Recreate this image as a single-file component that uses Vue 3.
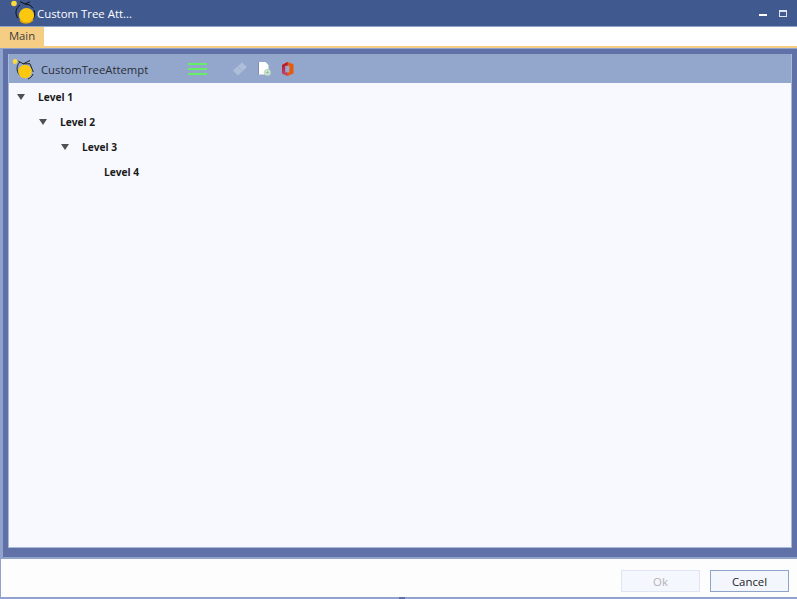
<script setup>
const levels = [
  { label: 'Level 1', arrow: true },
  { label: 'Level 2', arrow: true },
  { label: 'Level 3', arrow: true },
  { label: 'Level 4', arrow: false }
]
</script>

<template>
  <div class="window">
    <header class="titlebar">
      <svg class="logo" width="26" height="26" viewBox="0 0 26 26">
        <circle cx="3" cy="3.5" r="2.8" fill="#ffd83a" />
        <path d="M9 1.7 L14 4 L19 1.7 M14 4 L19 5 L22 8.3 M9 5 C5 8 3.5 13 6.7 18.3 M23 10 C24.5 13 23.5 17 22 19" fill="none" stroke="#111" stroke-width="1" />
        <circle cx="15.5" cy="15.5" r="7.6" fill="#fcc80f" />
        <path d="M9 20 C12 24 18 24 22 20" fill="none" stroke="#e8a800" stroke-width="1.6" />
      </svg>
      <span class="title">Custom Tree Att...</span>
      <div class="controls">
        <span class="minimize"></span>
        <span class="maximize"></span>
      </div>
    </header>

    <nav class="menubar">
      <span class="tab">Main</span>
    </nav>

    <main class="stage">
      <section class="panel">
        <div class="panel-head">
          <svg class="panel-logo" width="24" height="24" viewBox="0 0 24 24">
            <circle cx="2" cy="4.5" r="2.4" fill="#ffd83a" />
            <path d="M5.3 4.2 L10.3 6.8 L17 3.5 M10.3 6.8 L17 6.8 L20.3 15 M7 5 C3.6 8 2.6 14 7 18.5 M20 17 C19 20 17 21 15 22" fill="none" stroke="#222" stroke-width="1" />
            <circle cx="12" cy="14.5" r="6.8" fill="#fcc80f" />
          </svg>
          <span class="panel-title">CustomTreeAttempt</span>
          <div class="hamburger"><i></i><i></i><i></i></div>
          <svg class="tool eraser" width="16" height="16" viewBox="0 0 16 16">
            <path d="M1 9.5 L10 1.5 L15 6 L6 14.5 Z" fill="#aebeda" />
            <path d="M5.5 5.5 L10.5 10" stroke="#9fb0d0" stroke-width="1" />
          </svg>
          <svg class="tool page" width="14" height="16" viewBox="0 0 14 16">
            <path d="M0.5 1 H7.5 L10.5 4 V13.5 H0.5 Z" fill="#fff" />
            <path d="M0.5 1 V13.5" stroke="#7d8ca8" stroke-width="1" />
            <circle cx="9.5" cy="11.5" r="3.2" fill="#cfe6d2" stroke="#a7c8b0" stroke-width="0.6" />
            <path d="M9.5 9.8 V13.2 M7.8 11.5 H11.2" stroke="#8fbf9f" stroke-width="0.8" />
          </svg>
          <svg class="tool office" width="14" height="16" viewBox="0 0 14 16">
            <defs>
              <linearGradient id="officeLeft" x1="0" y1="0" x2="0" y2="1">
                <stop offset="0" stop-color="#b5101c" />
                <stop offset="1" stop-color="#c24a78" />
              </linearGradient>
            </defs>
            <path d="M6.5 1 L12.5 3.2 V12.6 L6.5 15 L1 12.4 V4 Z" fill="#e8590c" />
            <path d="M6.5 1 L1 4 V12.4 L6.5 15 Z" fill="url(#officeLeft)" />
            <path d="M4.2 4.8 H8.4 V11.4 H4.2 Z" fill="#9aa7cd" />
          </svg>
        </div>
        <div class="tree">
          <div
            v-for="(level, i) in levels"
            :key="level.label"
            class="row"
            :class="'indent-' + i"
          >
            <span class="arrow-slot"><span v-if="level.arrow" class="arrow"></span></span>
            <span class="label">{{ level.label }}</span>
          </div>
        </div>
      </section>
    </main>

    <footer class="footer">
      <button class="btn" disabled>Ok</button>
      <button class="btn cancel">Cancel</button>
    </footer>
    <div class="grip-row"><span class="grip"></span></div>
  </div>
</template>

<style>
html, body { margin: 0; padding: 0; background: #fff; overflow: hidden; }
</style>

<style scoped>
.window {
  width: 797px;
  height: 599px;
  display: flex;
  flex-direction: column;
  font-family: "Open Sans", "Liberation Sans", sans-serif;
  overflow: hidden;
  background: #fff;
}
.titlebar {
  height: 26px;
  background: #40598f;
  display: flex;
  align-items: center;
  box-sizing: border-box;
  padding-left: 11px;
  flex: none;
}
.logo { flex: none; }
.title {
  color: #fff;
  font-size: 11.4px;
  white-space: nowrap;
}
.controls {
  margin-left: auto;
  display: flex;
  align-items: center;
  gap: 12px;
  padding-right: 10px;
}
.minimize { width: 8px; height: 2px; background: #fff; margin-top: 3px; }
.maximize {
  width: 6px;
  height: 4px;
  background: #40598f;
  border: 1px solid #dfe4ee;
  border-top-width: 2px;
}
.menubar {
  height: 22px;
  flex: none;
  background: #fff;
  border-top: 1px solid #8fa3cc;
  border-bottom: 2px solid #f5cd85;
  box-sizing: border-box;
  display: flex;
}
.tab {
  width: 44px;
  background: #f5cd85;
  color: #3d3d3d;
  font-size: 11.3px;
  line-height: 18px;
  text-align: center;
}
.stage {
  height: 511px;
  flex: none;
  box-sizing: border-box;
  background: #5f71a7;
  border-top: 1px solid #8fa3cc;
  border-left: 3px solid #8fa3cc;
  border-bottom: 2px solid #8fa3cc;
  padding: 5px 5px 9px 5px;
  display: flex;
}
.panel {
  flex: 1;
  display: flex;
  flex-direction: column;
  background: #f8f9ff;
  border: 1px solid #a9b9d8;
  border-top: none;
}
.panel-head {
  height: 29px;
  flex: none;
  background: #93a7cc;
  display: flex;
  align-items: center;
  padding-left: 4px;
  box-sizing: border-box;
}
.panel-logo { flex: none; }
.panel-title {
  font-size: 11.3px;
  line-height: 16px;
  padding-top: 2px;
  color: #2a2e3a;
  margin-left: 4px;
  width: 147px;
  white-space: nowrap;
}
.hamburger {
  width: 19px;
  display: flex;
  flex-direction: column;
  gap: 3px;
}
.hamburger i { display: block; height: 2px; background: #66ee66; }
.tool { flex: none; }
.eraser { margin-left: 25px; }
.page { margin-left: 10px; }
.office { margin-left: 9px; }
.tree {
  padding-top: 1px;
  display: flex;
  flex-direction: column;
}
.row {
  height: 25px;
  display: flex;
  align-items: center;
}
.arrow-slot { width: 29px; flex: none; padding-left: 8px; box-sizing: border-box; }
.arrow {
  display: block;
  width: 0;
  height: 0;
  border-left: 4.5px solid transparent;
  border-right: 4.5px solid transparent;
  border-top: 6px solid #505050;
}
.indent-1 { padding-left: 22px; }
.indent-2 { padding-left: 44px; }
.indent-3 { padding-left: 66px; }
.label {
  font-size: 10.2px;
  font-weight: 700;
  color: #1a1a1a;
}
.footer {
  flex: 1;
  background: #fdfdfd;
  border-left: 1px solid #8fa3cc;
  display: flex;
  justify-content: flex-end;
  align-items: flex-start;
  gap: 10px;
  padding: 11px 8px 0 0;
}
.btn {
  width: 79px;
  height: 22px;
  box-sizing: border-box;
  border: 1px solid #8fa3cc;
  background: #f3f6fd;
  color: #222;
  font-family: inherit;
  font-size: 11.4px;
  padding: 0;
}
.btn:disabled {
  border-color: #dfe5f4;
  background: #f4f7fd;
  color: #b4b4b4;
}
.grip-row {
  height: 2px;
  flex: none;
  background: #8fa3cc;
  display: flex;
  justify-content: center;
}
.grip { width: 6px; height: 2px; background: #5f71a7; margin-left: 7px; }
</style>
